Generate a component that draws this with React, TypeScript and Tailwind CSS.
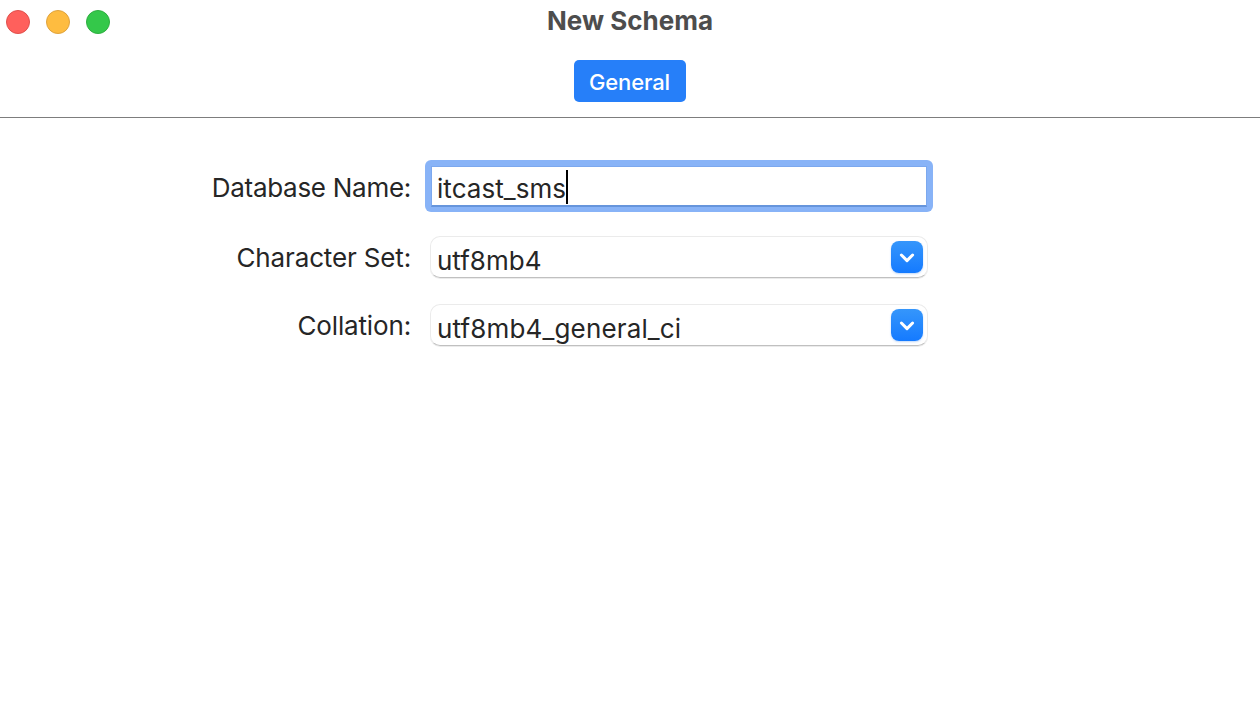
import React from "react";

function Chevron() {
  return (
    <span className="flex h-8 w-8 items-center justify-center rounded-[8px] bg-linear-to-b from-[#3596fb] to-[#147aff] shadow-[0_1px_2px_rgba(0,100,230,0.25)]">
      <svg width="32" height="32" viewBox="0 0 32 32" fill="none" stroke="white" strokeWidth="3" strokeLinecap="round" strokeLinejoin="round">
        <path d="M10.4 14L16 19.6L21.6 14" />
      </svg>
    </span>
  );
}

function Label({ children, className }: { children: string; className: string }) {
  return <span className={"w-[411px] pt-[2px] text-right leading-8 " + className}>{children}</span>;
}

function Combo({ value, className }: { value: string; className: string }) {
  return (
    <div className="ml-[19px] flex h-[42px] w-[498px] items-center justify-between rounded-[10px] border border-[#ebebeb] border-b-[#c0c0c0] pr-1 pl-[6px] shadow-[0_1px_0_rgba(0,0,0,0.08)]">
      <span className={"pt-[7px] leading-8 " + className}>{value}</span>
      <Chevron />
    </div>
  );
}

export default function App() {
  return (
    <div className="h-[722px] w-[1260px] overflow-hidden bg-white font-['Inter',sans-serif] text-[26px] text-[#262626]">
      <header className="h-[118px] border-b border-[#7d7d7d]">
        <div className="grid h-[44px] grid-cols-3">
          <div className="flex items-end gap-4 pb-[10px] pl-[6px]">
            <span className="h-6 w-6 rounded-full border border-[#e0504c] bg-[#ff605c]" />
            <span className="h-6 w-6 rounded-full border border-[#dfa33d] bg-[#febc40]" />
            <span className="h-6 w-6 rounded-full border border-[#2fae40] bg-[#34c84a]" />
          </div>
          <h1 className="pt-1 text-center text-[26px] leading-[34px] font-bold text-[#4d4d4d]">New Schema</h1>
        </div>
        <div className="flex justify-center pt-4">
          <button className="h-[42px] w-[112px] rounded-[5px] bg-[#267ff9] pt-[2px] pr-px text-[22px] font-medium tracking-[-0.15px] text-white">General</button>
        </div>
      </header>
      <main className="flex flex-col pt-[42px]">
        <div className="flex h-[52px] items-center">
          <Label className="pt-[4px] tracking-[-0.28px]">Database Name:</Label>
          <div className="ml-[14px] h-[52px] w-[508px] rounded-[6px] bg-[#88b3f7] px-[6px] pt-[6px] pb-[5px]">
            <div className="flex h-[41px] items-center border border-[#7ca8ee] border-b-2 border-b-[#6695dc] bg-white pt-[2px] pl-[5px]">
              <span className="mt-[2px] tracking-[0.05px]">itcast_sms</span>
              <span className="h-[34px] w-[2px] bg-black" />
            </div>
          </div>
        </div>
        <div className="mt-6 flex h-[42px] items-center">
          <Label className="tracking-[-0.15px]">Character Set:</Label>
          <Combo value="utf8mb4" className="tracking-normal" />
        </div>
        <div className="mt-[26px] flex h-[42px] items-center">
          <Label className="tracking-[-0.15px]">Collation:</Label>
          <Combo value="utf8mb4_general_ci" className="tracking-[0.15px]" />
        </div>
      </main>
    </div>
  );
}
